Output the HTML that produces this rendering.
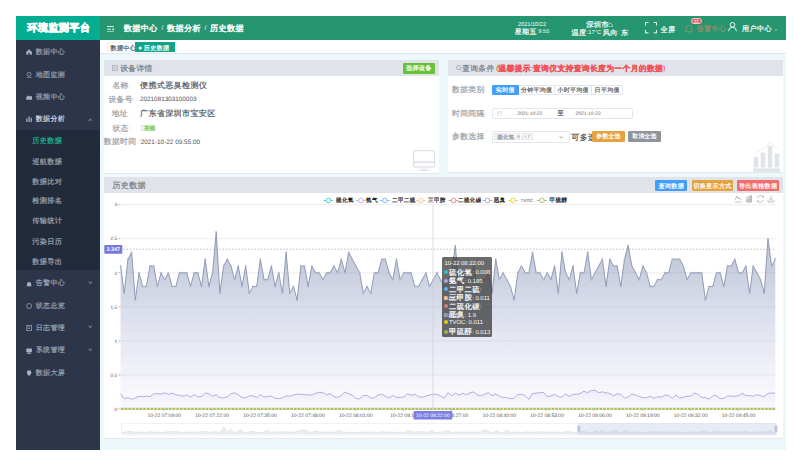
<!DOCTYPE html>
<html><head><meta charset="utf-8">
<style>
*{box-sizing:border-box;margin:0;padding:0;text-rendering:geometricPrecision}
html,body{width:794px;height:466px;overflow:hidden;background:#fff;font-family:"Liberation Sans",sans-serif;position:relative}
.a{position:absolute;white-space:nowrap}
.c{font-size:1.25em;letter-spacing:0.05em;-webkit-text-stroke:0.2px currentColor;position:relative;top:0.12em}
.logo .c{-webkit-text-stroke:0.75px currentColor}
.bc .c{-webkit-text-stroke:0.4px currentColor}
tspan.c{font-size:1.25em;letter-spacing:0.05em;stroke:currentColor;stroke-width:0.2px}
.logo{left:16px;top:16px;width:84px;height:24px;background:#02ad91;color:#fff;font-weight:bold;font-size:8px;line-height:24px;text-align:center;padding-left:1.8px}
.hdr{left:100px;top:16px;width:686px;height:24px;background:#259670}
.side{left:16px;top:40px;width:84px;height:410px;background:#2d354b}
.sub{left:16px;top:130.4px;width:84px;height:140px;background:#212b3c}
.mi{position:absolute;left:35.7px;font-size:5.6px;color:#9aa2ae;line-height:8px;height:8px}
.si{position:absolute;left:32.2px;font-size:5.75px;color:#9aa2ae;line-height:8px;height:8px}
.ico{position:absolute;left:25.6px;width:6.2px;height:6px}
.arr{position:absolute;left:88.5px;width:2.6px;height:2.6px;border-left:0.6px solid #6f7a8c;border-top:0.6px solid #6f7a8c}
.tabs{left:100px;top:40px;width:686px;height:13.6px;background:#fff;border-bottom:0.6px solid #e1e7ed}
.cont{left:100px;top:53.6px;width:686px;height:396.4px;background:#edf8fb}
.card{position:absolute;background:#fff;border-bottom:0.6px solid #e3e8ee}
.ch{position:absolute;left:0;top:0;right:0;height:15.6px;background:#e0e3e9}
.wt{color:#fff}
.lbl{position:absolute;font-size:6.2px;color:#9a9ea6;text-align:center;width:40px;left:101.5px;line-height:8px}
.val{position:absolute;font-size:6.4px;color:#50555e;left:140px;line-height:8px}
.btn{position:absolute;color:#fff;font-size:4.9px;text-align:center;border-radius:1.2px}
.rb{position:absolute;top:84.6px;height:10.8px;border:0.5px solid #e3e6ec;font-size:4.8px;color:#606266;text-align:center;line-height:10px;background:#fff}
.tt{position:absolute;left:442px;top:257.2px;width:50px;height:80.1px;background:rgba(55,55,55,0.74);border-radius:1.5px;color:#fff;font-size:5.9px;padding:2.4px 0 0 1.8px}
.tth{line-height:8.5px;height:8.5px;padding-left:0.6px}
.ttr{line-height:8.5px;height:8.5px}
.ttr i{display:inline-block;width:4px;height:4px;border-radius:50%;margin-right:1.2px;vertical-align:-0.3px}
</style></head><body>
<!-- header -->
<div class="a logo"><span class="c">环境监测平台</span></div>
<div class="a hdr"></div>
<svg class="a" style="left:107px;top:25.6px" width="7" height="6.4" viewBox="0 0 7 6.4"><rect x="0" y="0" width="6.8" height="1" fill="#dcefe7"/><rect x="0" y="2.7" width="3.8" height="1" fill="#dcefe7"/><rect x="0" y="5.4" width="6.8" height="1" fill="#dcefe7"/><path d="M6.8 1.7 L4.8 3.2 L6.8 4.7Z" fill="#dcefe7"/></svg>
<div class="a wt bc" style="left:123.8px;top:24.3px;font-size:6.5px;line-height:8px"><span class="c">数据中心</span> &nbsp;/&nbsp; <span class="c">数据分析</span> &nbsp;/&nbsp; <span class="c">历史数据</span></div>
<div class="a wt" style="left:512px;width:40px;text-align:center;top:22.4px;font-size:5.6px;line-height:6.6px">2021/10/22<br><span class="c">星期五</span> 9:55</div>
<div class="a wt" style="left:570px;width:60px;text-align:center;top:21.6px;font-size:5.75px;line-height:6.3px"><span class="c">深圳市</span> &nbsp;&nbsp;<br><span class="c">温度</span>:17°C <span class="c">风向</span>: <span class="c">东</span></div>
<svg class="a" style="left:607px;top:23.3px" width="6" height="4" viewBox="0 0 7 5" fill="none" stroke="#fff" stroke-width="0.75"><path d="M1.5 4.6h4a1.3 1.3 0 0 0 0.2-2.6a2 2 0 0 0-3.8-0.3a1.4 1.4 0 0 0-0.4 2.9z"/></svg>
<svg class="a" style="left:645.3px;top:22.4px" width="12.2" height="11.4" viewBox="0 0 12.2 11.4" fill="none" stroke="#fff" stroke-width="1"><path d="M0.5 3.5V0.5H3.5M8.7 0.5H11.7V3.5M11.7 7.9V10.9H8.7M3.5 10.9H0.5V7.9"/></svg>
<div class="a wt" style="left:660.4px;top:25.3px;font-size:5.8px;line-height:7px"><span class="c">全屏</span></div>
<svg class="a" style="left:685.3px;top:23.7px" width="8" height="9" viewBox="0 0 8 9" fill="none" stroke="#9a8f6a" stroke-width="0.8"><path d="M1.2 6.8V4a2.8 2.8 0 0 1 5.6 0v2.8l0.8 0.8H0.4z M3 8.2h2"/></svg>
<div class="a" style="left:690.8px;top:17.8px;width:10.8px;height:6.2px;border-radius:3.1px;background:#ef5358;border:0.5px solid #f6c9c9;color:#fff;font-size:4.6px;line-height:5.2px;text-align:center">22</div>
<div class="a" style="left:696.7px;top:25.3px;font-size:5.6px;line-height:7px;color:#9a8f6a"><span class="c">告警中心</span></div>
<svg class="a" style="left:727.8px;top:22.4px" width="9" height="9.6" viewBox="0 0 9 9.6" fill="none" stroke="#fff" stroke-width="0.9"><circle cx="4.5" cy="2.8" r="2.3"/><path d="M0.6 9.2a3.9 3.9 0 0 1 7.8 0"/></svg>
<div class="a wt" style="left:742px;top:25.3px;font-size:5.7px;line-height:7px"><span class="c">用户中心</span></div>
<div class="a" style="left:775px;top:29.4px;width:2px;height:1.2px;background:#6aae90"></div>

<!-- sidebar -->
<div class="a side"></div>
<div class="a sub"></div>
<svg class="ico" style="top:49.3px" viewBox="0 0 6.2 6"><path d="M0.2 3.1 L3.1 0.3 L6 3.1 V5.8 H3.8 V4.1 H2.4 V5.8 H0.2Z" fill="#a3abb8"/></svg>
<div class="mi" style="top:48.0px"><span class="c">数据中心</span></div>
<svg class="ico" style="top:71.5px" viewBox="0 0 6.2 6" fill="none" stroke="#aab2bf" stroke-width="0.7"><circle cx="3.1" cy="2.4" r="2"/><path d="M0.5 5.8h5.2"/></svg>
<div class="mi" style="top:70.7px"><span class="c">地图监测</span></div>
<svg class="ico" style="top:94.0px" viewBox="0 0 6.2 6"><path d="M0.3 5.8V3L2.5 1.5L4 2.5L6 2V5.8Z" fill="#aab2bf"/></svg>
<div class="mi" style="top:93.0px"><span class="c">视频中心</span></div>
<svg class="ico" style="top:116.2px" viewBox="0 0 6.2 6" fill="#aab2bf"><rect x="0.3" y="2.5" width="1.2" height="3.5"/><rect x="2.5" y="0.5" width="1.2" height="5.5"/><rect x="4.7" y="1.8" width="1.2" height="4.2"/></svg>
<div class="mi" style="top:115.2px;color:#d5dbe3"><span class="c">数据分析</span></div>
<div class="arr" style="top:118.8px;transform:rotate(45deg)"></div>
<div class="si" style="top:136.0px;color:#1fb592"><span class="c">历史数据</span></div>
<div class="si" style="top:156.8px"><span class="c">巡航数据</span></div>
<div class="si" style="top:177.0px"><span class="c">数据比对</span></div>
<div class="si" style="top:196.6px"><span class="c">检测排名</span></div>
<div class="si" style="top:216.5px"><span class="c">传输统计</span></div>
<div class="si" style="top:236.7px"><span class="c">污染日历</span></div>
<div class="si" style="top:257.0px"><span class="c">数据导出</span></div>
<svg class="ico" style="top:280.6px" viewBox="0 0 6.2 6"><path d="M1 4.6V3a2.1 2.1 0 0 1 4.2 0v1.6l0.7 0.7H0.3z" fill="#aab2bf"/></svg>
<div class="mi" style="top:279.6px"><span class="c">告警中心</span></div>
<div class="arr" style="top:280.5px;transform:rotate(225deg)"></div>
<svg class="ico" style="top:303.0px" viewBox="0 0 6.2 6" fill="none" stroke="#aab2bf" stroke-width="0.7"><circle cx="3.1" cy="3" r="2.5"/></svg>
<div class="mi" style="top:302.0px"><span class="c">状态总览</span></div>
<svg class="ico" style="top:325.3px" viewBox="0 0 6.2 6" fill="none" stroke="#aab2bf" stroke-width="0.7"><rect x="0.8" y="0.4" width="4.6" height="5.3"/><path d="M2 2h2M2 3.5h2"/></svg>
<div class="mi" style="top:324.3px"><span class="c">日志管理</span></div>
<div class="arr" style="top:325.2px;transform:rotate(225deg)"></div>
<svg class="ico" style="top:347.6px" viewBox="0 0 6.2 6" fill="#aab2bf"><rect x="0.3" y="0.5" width="5.6" height="3.8"/><rect x="2.5" y="4.3" width="1.2" height="1"/><rect x="1.2" y="5.2" width="3.8" height="0.8"/></svg>
<div class="mi" style="top:346.6px"><span class="c">系统管理</span></div>
<div class="arr" style="top:347.5px;transform:rotate(225deg)"></div>
<svg class="ico" style="top:370.0px" viewBox="0 0 6.2 6" fill="#aab2bf"><path d="M3.1 0.2a2.3 2.3 0 0 1 2.3 2.3c0 1.6-2.3 3.5-2.3 3.5S0.8 4.1 0.8 2.5A2.3 2.3 0 0 1 3.1 0.2z"/></svg>
<div class="mi" style="top:369.0px"><span class="c">数据大屏</span></div>

<!-- tabs -->
<div class="a tabs"></div>
<div class="a" style="left:106.5px;top:42px;width:25.9px;height:9.6px;border:0.5px solid #eef0f3;font-size:4.9px;line-height:10px;color:#555;padding-left:3px"><span class="c">数据中心</span></div>
<div class="a" style="left:134.8px;top:42px;width:40px;height:9.9px;background:#12a488"></div><svg class="a" style="left:138px;top:44.5px" width="5" height="5"><circle cx="2.2" cy="3" r="1.6" fill="#fff"/></svg><div class="a" style="left:143.8px;top:43px;font-size:4.9px;line-height:9.9px;color:#fff"><span class="c">历史数据</span></div><div class="a" style="left:166.4px;top:43px;font-size:4.2px;line-height:9.9px;color:#cdeee6">×</div>

<!-- content -->
<div class="a cont"></div>

<!-- card 1 -->
<div class="card" style="left:104px;top:60px;width:335.4px;height:113.5px"><div class="ch"></div></div>
<svg class="a" style="left:111.8px;top:65px" width="6" height="6" viewBox="0 0 6 6" fill="none" stroke="#9aa0aa" stroke-width="0.6"><rect x="0.4" y="0.4" width="5.2" height="5.2"/><path d="M1.5 2.2h3M1.5 3.8h3"/></svg>
<div class="a" style="left:120.2px;top:64px;font-size:6.2px;line-height:8px;color:#767b85"><span class="c">设备详情</span></div>
<div class="a btn" style="left:402.7px;top:62.5px;width:32.3px;height:11.3px;line-height:11.3px;background:#67c23a"><span class="c">选择设备</span></div>
<div class="lbl" style="top:80.6px"><span class="c">名称</span>:</div>
<div class="lbl" style="top:94.8px"><span class="c">设备号</span>:</div>
<div class="lbl" style="top:109px"><span class="c">地址</span> :</div>
<div class="lbl" style="top:123.6px"><span class="c">状态</span>:</div>
<div class="lbl" style="top:137.2px;left:101.8px"><span class="c">数据时间</span> :</div>
<div class="val" style="top:80.6px"><span class="c">便携式恶臭检测仪</span></div>
<div class="val" style="top:96.3px;font-size:6.35px">2021081303100003</div>
<div class="val" style="top:109px"><span class="c">广东省深圳市宝安区</span></div>
<div class="a" style="left:140.7px;top:124.5px;width:13.9px;height:6.9px;background:#eaf8e4;border:0.4px solid #d6f0cb;color:#67c23a;font-size:4.3px;line-height:6.3px;padding-left:2.5px"><span class="c">在线</span></div>
<div class="val" style="top:138.6px;left:140.7px;font-size:6.4px">2021-10-22 09:55:00</div>
<svg class="a" style="left:412.5px;top:149.5px" width="22" height="22" viewBox="0 0 22 22" fill="none" stroke="#d5d9e0" stroke-width="1.05"><rect x="0.7" y="0.7" width="20.6" height="16.2" rx="1"/><path d="M0.7 12.1h20.6M11 17v2.6"/><rect x="6.4" y="19.5" width="9.2" height="1.2" fill="#d5d9e0" stroke="none"/></svg>

<!-- card 2 -->
<div class="card" style="left:447.7px;top:60px;width:335.5px;height:113.3px"><div class="ch"></div></div>
<svg class="a" style="left:456.4px;top:64.8px" width="5.6" height="6" viewBox="0 0 5.6 6" fill="none" stroke="#8d929b" stroke-width="0.6"><circle cx="2.6" cy="2.6" r="2.1"/><path d="M4.1 4.1l1.2 1.4"/></svg>
<div class="a" style="left:462px;top:64px;font-size:6.2px;line-height:8px;color:#767b85"><span class="c">查询条件</span> <span style="color:#f0525a;font-weight:bold">(<span class="c">温馨提示</span>:<span class="c">查询仪支持查询长度为一个月的数据</span>)</span></div>
<div class="a" style="left:452px;top:85.4px;font-size:6.2px;line-height:8px;color:#9a9ea6"><span class="c">数据类别</span>:</div>
<div class="rb" style="left:491.5px;width:27.6px;background:#409eff;border-color:#409eff;color:#fff;border-radius:1px 0 0 1px"><span class="c">实时值</span></div>
<div class="rb" style="left:519px;width:36.3px;border-left:none"><span class="c">分钟平均值</span></div>
<div class="rb" style="left:555.3px;width:36.6px;border-left:none"><span class="c">小时平均值</span></div>
<div class="rb" style="left:591.9px;width:31.6px;border-left:none;border-radius:0 1px 1px 0"><span class="c">日平均值</span></div>
<div class="a" style="left:452px;top:109px;font-size:6.2px;line-height:8px;color:#9a9ea6"><span class="c">时间间隔</span>:</div>
<div class="a" style="left:491.5px;top:107.8px;width:141px;height:10.8px;border:0.5px solid #e3e6ec;background:#fff;border-radius:1.5px"></div>
<svg class="a" style="left:496.5px;top:110.6px" width="5.4" height="5.4" viewBox="0 0 5.4 5.4" fill="none" stroke="#c0c4cc" stroke-width="0.5"><rect x="0.5" y="0.7" width="4.4" height="4.3" rx="0.4"/><path d="M0.5 1.9h4.4"/></svg>
<div class="a" style="left:517.2px;top:110.8px;font-size:4.9px;line-height:8px;color:#606266">2021-10-22</div>
<div class="a" style="left:557.5px;top:109.6px;font-size:4.9px;line-height:8px;color:#606266"><span class="c">至</span></div>
<div class="a" style="left:575.6px;top:110.8px;font-size:4.9px;line-height:8px;color:#606266">2021-10-22</div>
<div class="a" style="left:452px;top:132.3px;font-size:6.2px;line-height:8px;color:#9a9ea6"><span class="c">参数选择</span>:</div>
<div class="a" style="left:491.5px;top:131px;width:78px;height:11.5px;border:0.5px solid #e3e6ec;background:#fff;border-radius:1.5px"></div>
<div class="a" style="left:494px;top:133.2px;width:25.8px;height:7.2px;background:#f4f4f5;border:0.4px solid #e9e9eb;font-size:4.4px;line-height:6.6px;color:#909399;padding-left:2.2px"><span class="c">硫化氢</span> <span style="display:inline-block;width:3.2px;height:3.2px;border-radius:50%;background:#c0c4cc;vertical-align:-0.3px;margin-left:1px"></span></div>
<div class="a" style="left:521px;top:133.2px;width:11.7px;height:7.2px;background:#f4f4f5;border:0.4px solid #e9e9eb;font-size:4.4px;line-height:6.6px;color:#909399;text-align:center">+ 7</div>
<div class="a" style="left:560.3px;top:134.6px;width:2.6px;height:2.6px;border-right:0.5px solid #c0c4cc;border-bottom:0.5px solid #c0c4cc;transform:rotate(45deg)"></div>
<div class="a" style="left:571.3px;top:132.6px;font-size:6.4px;line-height:8px;color:#45494f"><span class="c">可多选</span></div>
<div class="a btn" style="left:592.4px;top:131.2px;width:32.2px;height:10.8px;line-height:10.8px;background:#e6a23c;font-size:4.65px"><span class="c">参数全选</span></div>
<div class="a btn" style="left:628.4px;top:131.2px;width:32.2px;height:10.8px;line-height:10.8px;background:#909399;font-size:4.65px"><span class="c">取消全选</span></div>
<svg class="a" style="left:753.4px;top:141.3px" width="27" height="31" viewBox="0 0 27 31" fill="#e0e3e8"><rect x="0.7" y="16" width="4.6" height="10.5" rx="0.8"/><rect x="7.7" y="11.5" width="4.6" height="15" rx="0.8"/><rect x="14.7" y="4.8" width="4.6" height="21.7" rx="0.8"/><rect x="21.7" y="12.5" width="4.6" height="14" rx="0.8"/><rect x="0" y="27.4" width="27" height="3.4"/><path d="M2 13 L11 7 L17 1.5 L25 9" fill="none" stroke="#e0e3e8" stroke-width="0.7"/></svg>

<!-- card 3 -->
<div class="card" style="left:104px;top:176.5px;width:679.2px;height:262.3px"><div class="ch" style="height:16.2px"></div></div>
<div class="a" style="left:112.4px;top:180.8px;font-size:6.4px;line-height:8px;color:#767b85"><span class="c">历史数据</span></div>
<div class="a btn" style="left:655.3px;top:179.8px;width:32px;height:11px;line-height:11px;background:#409eff"><span class="c">查询数据</span></div>
<div class="a btn" style="left:691.7px;top:179.8px;width:41.6px;height:11px;line-height:11px;background:#e6a23c"><span class="c">切换显示方式</span></div>
<div class="a btn" style="left:737.4px;top:179.8px;width:41.6px;height:11px;line-height:11px;background:#f56c6c"><span class="c">导出表格数据</span></div>
<svg class="a" style="left:734px;top:195px" width="42" height="8" viewBox="0 0 42 8" fill="none" stroke="#9a9a9a" stroke-width="0.6"><path d="M1 5 L2.8 1 L4.2 4 L5.4 2.5 L7 5"/><path d="M0.8 7h6.5"/><rect x="12.5" y="4" width="1.2" height="3.5" fill="#9a9a9a" stroke="none"/><rect x="14.5" y="2.5" width="1.2" height="5" fill="#9a9a9a" stroke="none"/><rect x="16.5" y="1" width="1.2" height="6.5" fill="#9a9a9a" stroke="none"/><path d="M11.8 3L17.8 0.5"/><path d="M23.6 3.2a3.1 3.1 0 0 1 5.6-1.3M29.4 4.8a3.1 3.1 0 0 1-5.6 1.3"/><path d="M29.6 0.6v1.6h-1.6M23.4 7.4v-1.6h1.6"/><path d="M37 0.5v5M35 3.5l2 2l2-2M34 5v2h6v-2"/></svg>

<svg class="chart" width="794" height="466" viewBox="0 0 794 466" style="position:absolute;left:0;top:0">
<defs>
<linearGradient id="g1" x1="0" y1="0" x2="0" y2="1" gradientUnits="userSpaceOnUse" >
</linearGradient>
<linearGradient id="go" x1="0" y1="230" x2="0" y2="409" gradientUnits="userSpaceOnUse">
<stop offset="0" stop-color="#8d98b3" stop-opacity="0.62"/>
<stop offset="0.5" stop-color="#919bc4" stop-opacity="0.3"/>
<stop offset="1" stop-color="#a0a4e0" stop-opacity="0.03"/>
</linearGradient>
<linearGradient id="ga" x1="0" y1="390" x2="0" y2="409" gradientUnits="userSpaceOnUse">
<stop offset="0" stop-color="#b6a2de" stop-opacity="0.14"/>
<stop offset="1" stop-color="#b6a2de" stop-opacity="0.02"/>
</linearGradient>
</defs>
<g><line x1="118.5" y1="204.70" x2="775.5" y2="204.70" stroke="#e0e0e0" stroke-width="0.6"/><line x1="118.4" y1="204.70" x2="120.4" y2="204.70" stroke="#999" stroke-width="0.6"/><line x1="118.5" y1="238.75" x2="775.5" y2="238.75" stroke="#e0e0e0" stroke-width="0.6"/><line x1="118.4" y1="238.75" x2="120.4" y2="238.75" stroke="#999" stroke-width="0.6"/><line x1="118.5" y1="272.80" x2="775.5" y2="272.80" stroke="#e0e0e0" stroke-width="0.6"/><line x1="118.4" y1="272.80" x2="120.4" y2="272.80" stroke="#999" stroke-width="0.6"/><line x1="118.5" y1="306.85" x2="775.5" y2="306.85" stroke="#e0e0e0" stroke-width="0.6"/><line x1="118.4" y1="306.85" x2="120.4" y2="306.85" stroke="#999" stroke-width="0.6"/><line x1="118.5" y1="340.90" x2="775.5" y2="340.90" stroke="#e0e0e0" stroke-width="0.6"/><line x1="118.4" y1="340.90" x2="120.4" y2="340.90" stroke="#999" stroke-width="0.6"/><line x1="118.5" y1="374.95" x2="775.5" y2="374.95" stroke="#e0e0e0" stroke-width="0.6"/><line x1="118.4" y1="374.95" x2="120.4" y2="374.95" stroke="#999" stroke-width="0.6"/><line x1="118.5" y1="409.00" x2="775.5" y2="409.00" stroke="#c8c8c8" stroke-width="0.6"/><line x1="118.4" y1="409.00" x2="120.4" y2="409.00" stroke="#999" stroke-width="0.6"/></g>
<g font-family="Liberation Sans" font-size="4.75" fill="#555"><text x="117.2" y="206.40" text-anchor="end">3</text><text x="117.2" y="240.45" text-anchor="end">2.5</text><text x="117.2" y="274.50" text-anchor="end">2</text><text x="117.2" y="308.55" text-anchor="end">1.5</text><text x="117.2" y="342.60" text-anchor="end">1</text><text x="117.2" y="376.65" text-anchor="end">0.5</text><text x="117.2" y="410.70" text-anchor="end">0</text></g>
<polygon points="120.60,409 120.60,265.99 124.28,293.23 127.96,259.18 131.63,252.37 135.31,300.04 138.99,272.80 142.67,286.42 146.35,286.42 150.02,265.99 153.70,265.99 157.38,286.42 161.06,272.80 164.74,279.61 168.42,272.80 172.09,286.42 175.77,286.42 179.45,272.80 183.13,272.80 186.81,272.80 190.48,286.42 194.16,272.80 197.84,272.80 201.52,286.42 205.20,259.18 208.87,286.42 212.55,272.80 216.23,231.94 219.91,293.23 223.59,265.99 227.26,259.18 230.94,265.99 234.62,279.61 238.30,265.99 241.98,286.42 245.66,265.99 249.33,293.23 253.01,286.42 256.69,286.42 260.37,259.18 264.05,279.61 267.72,279.61 271.40,265.99 275.08,286.42 278.76,272.80 282.44,293.23 286.11,252.37 289.79,293.23 293.47,286.42 297.15,300.04 300.83,265.99 304.50,265.99 308.18,286.42 311.86,265.99 315.54,272.80 319.22,272.80 322.89,279.61 326.57,272.80 330.25,272.80 333.93,265.99 337.61,272.80 341.29,259.18 344.96,272.80 348.64,252.37 352.32,259.18 356.00,265.99 359.68,272.80 363.35,293.23 367.03,286.42 370.71,293.23 374.39,272.80 378.07,272.80 381.74,259.18 385.42,259.18 389.10,272.80 392.78,279.61 396.46,259.18 400.13,279.61 403.81,272.80 407.49,272.80 411.17,272.80 414.85,286.42 418.53,286.42 422.20,279.61 425.88,272.80 429.56,286.42 433.24,279.61 436.92,272.80 440.59,279.61 444.27,286.42 447.95,279.61 451.63,272.80 455.31,245.56 458.98,286.42 462.66,279.61 466.34,272.80 470.02,279.61 473.70,265.99 477.37,286.42 481.05,279.61 484.73,279.61 488.41,272.80 492.09,293.23 495.77,259.18 499.44,279.61 503.12,272.80 506.80,279.61 510.48,286.42 514.16,300.04 517.83,272.80 521.51,265.99 525.19,272.80 528.87,272.80 532.55,252.37 536.22,272.80 539.90,272.80 543.58,279.61 547.26,272.80 550.94,279.61 554.61,265.99 558.29,293.23 561.97,252.37 565.65,272.80 569.33,279.61 573.01,265.99 576.68,293.23 580.36,272.80 584.04,272.80 587.72,252.37 591.40,279.61 595.07,272.80 598.75,265.99 602.43,259.18 606.11,286.42 609.79,259.18 613.46,265.99 617.14,265.99 620.82,286.42 624.50,259.18 628.18,245.56 631.85,265.99 635.53,272.80 639.21,279.61 642.89,265.99 646.57,272.80 650.24,286.42 653.92,286.42 657.60,279.61 661.28,279.61 664.96,272.80 668.64,272.80 672.31,259.18 675.99,259.18 679.67,259.18 683.35,265.99 687.03,279.61 690.70,272.80 694.38,272.80 698.06,272.80 701.74,272.80 705.42,300.04 709.09,286.42 712.77,286.42 716.45,272.80 720.13,272.80 723.81,286.42 727.48,265.99 731.16,265.99 734.84,259.18 738.52,272.80 742.20,272.80 745.88,265.99 749.55,293.23 753.23,265.99 756.91,272.80 760.59,279.61 764.27,293.23 767.94,238.75 771.62,265.99 775.30,259.18 775.30,409" fill="url(#go)"/>
<polyline points="120.60,265.99 124.28,293.23 127.96,259.18 131.63,252.37 135.31,300.04 138.99,272.80 142.67,286.42 146.35,286.42 150.02,265.99 153.70,265.99 157.38,286.42 161.06,272.80 164.74,279.61 168.42,272.80 172.09,286.42 175.77,286.42 179.45,272.80 183.13,272.80 186.81,272.80 190.48,286.42 194.16,272.80 197.84,272.80 201.52,286.42 205.20,259.18 208.87,286.42 212.55,272.80 216.23,231.94 219.91,293.23 223.59,265.99 227.26,259.18 230.94,265.99 234.62,279.61 238.30,265.99 241.98,286.42 245.66,265.99 249.33,293.23 253.01,286.42 256.69,286.42 260.37,259.18 264.05,279.61 267.72,279.61 271.40,265.99 275.08,286.42 278.76,272.80 282.44,293.23 286.11,252.37 289.79,293.23 293.47,286.42 297.15,300.04 300.83,265.99 304.50,265.99 308.18,286.42 311.86,265.99 315.54,272.80 319.22,272.80 322.89,279.61 326.57,272.80 330.25,272.80 333.93,265.99 337.61,272.80 341.29,259.18 344.96,272.80 348.64,252.37 352.32,259.18 356.00,265.99 359.68,272.80 363.35,293.23 367.03,286.42 370.71,293.23 374.39,272.80 378.07,272.80 381.74,259.18 385.42,259.18 389.10,272.80 392.78,279.61 396.46,259.18 400.13,279.61 403.81,272.80 407.49,272.80 411.17,272.80 414.85,286.42 418.53,286.42 422.20,279.61 425.88,272.80 429.56,286.42 433.24,279.61 436.92,272.80 440.59,279.61 444.27,286.42 447.95,279.61 451.63,272.80 455.31,245.56 458.98,286.42 462.66,279.61 466.34,272.80 470.02,279.61 473.70,265.99 477.37,286.42 481.05,279.61 484.73,279.61 488.41,272.80 492.09,293.23 495.77,259.18 499.44,279.61 503.12,272.80 506.80,279.61 510.48,286.42 514.16,300.04 517.83,272.80 521.51,265.99 525.19,272.80 528.87,272.80 532.55,252.37 536.22,272.80 539.90,272.80 543.58,279.61 547.26,272.80 550.94,279.61 554.61,265.99 558.29,293.23 561.97,252.37 565.65,272.80 569.33,279.61 573.01,265.99 576.68,293.23 580.36,272.80 584.04,272.80 587.72,252.37 591.40,279.61 595.07,272.80 598.75,265.99 602.43,259.18 606.11,286.42 609.79,259.18 613.46,265.99 617.14,265.99 620.82,286.42 624.50,259.18 628.18,245.56 631.85,265.99 635.53,272.80 639.21,279.61 642.89,265.99 646.57,272.80 650.24,286.42 653.92,286.42 657.60,279.61 661.28,279.61 664.96,272.80 668.64,272.80 672.31,259.18 675.99,259.18 679.67,259.18 683.35,265.99 687.03,279.61 690.70,272.80 694.38,272.80 698.06,272.80 701.74,272.80 705.42,300.04 709.09,286.42 712.77,286.42 716.45,272.80 720.13,272.80 723.81,286.42 727.48,265.99 731.16,265.99 734.84,259.18 738.52,272.80 742.20,272.80 745.88,265.99 749.55,293.23 753.23,265.99 756.91,272.80 760.59,279.61 764.27,293.23 767.94,238.75 771.62,265.99 775.30,259.18" fill="none" stroke="#8792b0" stroke-width="0.9" stroke-linejoin="round"/>
<g fill="#d5d9e6" stroke="#8792b0" stroke-width="0.35"><circle cx="120.60" cy="265.99" r="0.75"/><circle cx="124.28" cy="293.23" r="0.75"/><circle cx="127.96" cy="259.18" r="0.75"/><circle cx="131.63" cy="252.37" r="0.75"/><circle cx="135.31" cy="300.04" r="0.75"/><circle cx="138.99" cy="272.80" r="0.75"/><circle cx="142.67" cy="286.42" r="0.75"/><circle cx="146.35" cy="286.42" r="0.75"/><circle cx="150.02" cy="265.99" r="0.75"/><circle cx="153.70" cy="265.99" r="0.75"/><circle cx="157.38" cy="286.42" r="0.75"/><circle cx="161.06" cy="272.80" r="0.75"/><circle cx="164.74" cy="279.61" r="0.75"/><circle cx="168.42" cy="272.80" r="0.75"/><circle cx="172.09" cy="286.42" r="0.75"/><circle cx="175.77" cy="286.42" r="0.75"/><circle cx="179.45" cy="272.80" r="0.75"/><circle cx="183.13" cy="272.80" r="0.75"/><circle cx="186.81" cy="272.80" r="0.75"/><circle cx="190.48" cy="286.42" r="0.75"/><circle cx="194.16" cy="272.80" r="0.75"/><circle cx="197.84" cy="272.80" r="0.75"/><circle cx="201.52" cy="286.42" r="0.75"/><circle cx="205.20" cy="259.18" r="0.75"/><circle cx="208.87" cy="286.42" r="0.75"/><circle cx="212.55" cy="272.80" r="0.75"/><circle cx="216.23" cy="231.94" r="0.75"/><circle cx="219.91" cy="293.23" r="0.75"/><circle cx="223.59" cy="265.99" r="0.75"/><circle cx="227.26" cy="259.18" r="0.75"/><circle cx="230.94" cy="265.99" r="0.75"/><circle cx="234.62" cy="279.61" r="0.75"/><circle cx="238.30" cy="265.99" r="0.75"/><circle cx="241.98" cy="286.42" r="0.75"/><circle cx="245.66" cy="265.99" r="0.75"/><circle cx="249.33" cy="293.23" r="0.75"/><circle cx="253.01" cy="286.42" r="0.75"/><circle cx="256.69" cy="286.42" r="0.75"/><circle cx="260.37" cy="259.18" r="0.75"/><circle cx="264.05" cy="279.61" r="0.75"/><circle cx="267.72" cy="279.61" r="0.75"/><circle cx="271.40" cy="265.99" r="0.75"/><circle cx="275.08" cy="286.42" r="0.75"/><circle cx="278.76" cy="272.80" r="0.75"/><circle cx="282.44" cy="293.23" r="0.75"/><circle cx="286.11" cy="252.37" r="0.75"/><circle cx="289.79" cy="293.23" r="0.75"/><circle cx="293.47" cy="286.42" r="0.75"/><circle cx="297.15" cy="300.04" r="0.75"/><circle cx="300.83" cy="265.99" r="0.75"/><circle cx="304.50" cy="265.99" r="0.75"/><circle cx="308.18" cy="286.42" r="0.75"/><circle cx="311.86" cy="265.99" r="0.75"/><circle cx="315.54" cy="272.80" r="0.75"/><circle cx="319.22" cy="272.80" r="0.75"/><circle cx="322.89" cy="279.61" r="0.75"/><circle cx="326.57" cy="272.80" r="0.75"/><circle cx="330.25" cy="272.80" r="0.75"/><circle cx="333.93" cy="265.99" r="0.75"/><circle cx="337.61" cy="272.80" r="0.75"/><circle cx="341.29" cy="259.18" r="0.75"/><circle cx="344.96" cy="272.80" r="0.75"/><circle cx="348.64" cy="252.37" r="0.75"/><circle cx="352.32" cy="259.18" r="0.75"/><circle cx="356.00" cy="265.99" r="0.75"/><circle cx="359.68" cy="272.80" r="0.75"/><circle cx="363.35" cy="293.23" r="0.75"/><circle cx="367.03" cy="286.42" r="0.75"/><circle cx="370.71" cy="293.23" r="0.75"/><circle cx="374.39" cy="272.80" r="0.75"/><circle cx="378.07" cy="272.80" r="0.75"/><circle cx="381.74" cy="259.18" r="0.75"/><circle cx="385.42" cy="259.18" r="0.75"/><circle cx="389.10" cy="272.80" r="0.75"/><circle cx="392.78" cy="279.61" r="0.75"/><circle cx="396.46" cy="259.18" r="0.75"/><circle cx="400.13" cy="279.61" r="0.75"/><circle cx="403.81" cy="272.80" r="0.75"/><circle cx="407.49" cy="272.80" r="0.75"/><circle cx="411.17" cy="272.80" r="0.75"/><circle cx="414.85" cy="286.42" r="0.75"/><circle cx="418.53" cy="286.42" r="0.75"/><circle cx="422.20" cy="279.61" r="0.75"/><circle cx="425.88" cy="272.80" r="0.75"/><circle cx="429.56" cy="286.42" r="0.75"/><circle cx="433.24" cy="279.61" r="0.75"/><circle cx="436.92" cy="272.80" r="0.75"/><circle cx="440.59" cy="279.61" r="0.75"/><circle cx="444.27" cy="286.42" r="0.75"/><circle cx="447.95" cy="279.61" r="0.75"/><circle cx="451.63" cy="272.80" r="0.75"/><circle cx="455.31" cy="245.56" r="0.75"/><circle cx="458.98" cy="286.42" r="0.75"/><circle cx="462.66" cy="279.61" r="0.75"/><circle cx="466.34" cy="272.80" r="0.75"/><circle cx="470.02" cy="279.61" r="0.75"/><circle cx="473.70" cy="265.99" r="0.75"/><circle cx="477.37" cy="286.42" r="0.75"/><circle cx="481.05" cy="279.61" r="0.75"/><circle cx="484.73" cy="279.61" r="0.75"/><circle cx="488.41" cy="272.80" r="0.75"/><circle cx="492.09" cy="293.23" r="0.75"/><circle cx="495.77" cy="259.18" r="0.75"/><circle cx="499.44" cy="279.61" r="0.75"/><circle cx="503.12" cy="272.80" r="0.75"/><circle cx="506.80" cy="279.61" r="0.75"/><circle cx="510.48" cy="286.42" r="0.75"/><circle cx="514.16" cy="300.04" r="0.75"/><circle cx="517.83" cy="272.80" r="0.75"/><circle cx="521.51" cy="265.99" r="0.75"/><circle cx="525.19" cy="272.80" r="0.75"/><circle cx="528.87" cy="272.80" r="0.75"/><circle cx="532.55" cy="252.37" r="0.75"/><circle cx="536.22" cy="272.80" r="0.75"/><circle cx="539.90" cy="272.80" r="0.75"/><circle cx="543.58" cy="279.61" r="0.75"/><circle cx="547.26" cy="272.80" r="0.75"/><circle cx="550.94" cy="279.61" r="0.75"/><circle cx="554.61" cy="265.99" r="0.75"/><circle cx="558.29" cy="293.23" r="0.75"/><circle cx="561.97" cy="252.37" r="0.75"/><circle cx="565.65" cy="272.80" r="0.75"/><circle cx="569.33" cy="279.61" r="0.75"/><circle cx="573.01" cy="265.99" r="0.75"/><circle cx="576.68" cy="293.23" r="0.75"/><circle cx="580.36" cy="272.80" r="0.75"/><circle cx="584.04" cy="272.80" r="0.75"/><circle cx="587.72" cy="252.37" r="0.75"/><circle cx="591.40" cy="279.61" r="0.75"/><circle cx="595.07" cy="272.80" r="0.75"/><circle cx="598.75" cy="265.99" r="0.75"/><circle cx="602.43" cy="259.18" r="0.75"/><circle cx="606.11" cy="286.42" r="0.75"/><circle cx="609.79" cy="259.18" r="0.75"/><circle cx="613.46" cy="265.99" r="0.75"/><circle cx="617.14" cy="265.99" r="0.75"/><circle cx="620.82" cy="286.42" r="0.75"/><circle cx="624.50" cy="259.18" r="0.75"/><circle cx="628.18" cy="245.56" r="0.75"/><circle cx="631.85" cy="265.99" r="0.75"/><circle cx="635.53" cy="272.80" r="0.75"/><circle cx="639.21" cy="279.61" r="0.75"/><circle cx="642.89" cy="265.99" r="0.75"/><circle cx="646.57" cy="272.80" r="0.75"/><circle cx="650.24" cy="286.42" r="0.75"/><circle cx="653.92" cy="286.42" r="0.75"/><circle cx="657.60" cy="279.61" r="0.75"/><circle cx="661.28" cy="279.61" r="0.75"/><circle cx="664.96" cy="272.80" r="0.75"/><circle cx="668.64" cy="272.80" r="0.75"/><circle cx="672.31" cy="259.18" r="0.75"/><circle cx="675.99" cy="259.18" r="0.75"/><circle cx="679.67" cy="259.18" r="0.75"/><circle cx="683.35" cy="265.99" r="0.75"/><circle cx="687.03" cy="279.61" r="0.75"/><circle cx="690.70" cy="272.80" r="0.75"/><circle cx="694.38" cy="272.80" r="0.75"/><circle cx="698.06" cy="272.80" r="0.75"/><circle cx="701.74" cy="272.80" r="0.75"/><circle cx="705.42" cy="300.04" r="0.75"/><circle cx="709.09" cy="286.42" r="0.75"/><circle cx="712.77" cy="286.42" r="0.75"/><circle cx="716.45" cy="272.80" r="0.75"/><circle cx="720.13" cy="272.80" r="0.75"/><circle cx="723.81" cy="286.42" r="0.75"/><circle cx="727.48" cy="265.99" r="0.75"/><circle cx="731.16" cy="265.99" r="0.75"/><circle cx="734.84" cy="259.18" r="0.75"/><circle cx="738.52" cy="272.80" r="0.75"/><circle cx="742.20" cy="272.80" r="0.75"/><circle cx="745.88" cy="265.99" r="0.75"/><circle cx="749.55" cy="293.23" r="0.75"/><circle cx="753.23" cy="265.99" r="0.75"/><circle cx="756.91" cy="272.80" r="0.75"/><circle cx="760.59" cy="279.61" r="0.75"/><circle cx="764.27" cy="293.23" r="0.75"/><circle cx="767.94" cy="238.75" r="0.75"/><circle cx="771.62" cy="265.99" r="0.75"/><circle cx="775.30" cy="259.18" r="0.75"/></g>
<polygon points="120.60,409 120.60,393.63 124.28,398.73 127.96,397.56 131.63,399.38 135.31,397.98 138.99,396.36 142.67,396.64 146.35,396.15 150.02,396.54 153.70,393.81 157.38,393.63 161.06,394.09 164.74,392.74 168.42,394.20 172.09,393.17 175.77,394.75 179.45,395.30 183.13,396.18 186.81,394.94 190.48,396.96 194.16,394.68 197.84,396.74 201.52,396.74 205.20,392.93 208.87,393.67 212.55,396.22 216.23,394.79 219.91,397.72 223.59,397.80 227.26,396.80 230.94,393.72 234.62,392.84 238.30,394.57 241.98,397.47 245.66,397.93 249.33,395.86 253.01,395.77 256.69,397.65 260.37,394.61 264.05,397.12 267.72,396.30 271.40,396.12 275.08,398.30 278.76,398.56 282.44,397.87 286.11,395.81 289.79,396.38 293.47,394.81 297.15,394.16 300.83,394.20 304.50,394.66 308.18,394.91 311.86,394.92 315.54,393.27 319.22,392.41 322.89,392.50 326.57,394.86 330.25,393.71 333.93,396.68 337.61,397.43 341.29,395.32 344.96,392.05 348.64,393.60 352.32,395.12 356.00,398.58 359.68,398.78 363.35,395.54 367.03,395.46 370.71,398.06 374.39,397.85 378.07,395.10 381.74,394.03 385.42,396.34 389.10,397.90 392.78,395.48 396.46,397.39 400.13,397.48 403.81,396.81 407.49,393.80 411.17,395.30 414.85,394.21 418.53,396.69 422.20,397.15 425.88,396.11 429.56,394.90 433.24,394.19 436.92,394.37 440.59,395.96 444.27,398.09 447.95,392.58 451.63,395.75 455.31,392.98 458.98,395.03 462.66,393.34 466.34,394.64 470.02,392.75 473.70,391.88 477.37,394.96 481.05,395.63 484.73,394.19 488.41,392.54 492.09,395.65 495.77,393.99 499.44,396.11 503.12,397.74 506.80,397.49 510.48,398.70 514.16,398.23 517.83,394.46 521.51,394.43 525.19,395.55 528.87,399.38 532.55,393.67 536.22,393.05 539.90,392.54 543.58,392.50 547.26,396.70 550.94,395.87 554.61,394.42 558.29,396.58 561.97,397.16 565.65,393.85 569.33,396.58 573.01,394.24 576.68,394.52 580.36,393.32 584.04,391.17 587.72,392.66 591.40,390.46 595.07,390.32 598.75,392.71 602.43,391.83 606.11,392.79 609.79,393.46 613.46,395.90 617.14,393.87 620.82,394.42 624.50,398.15 628.18,397.03 631.85,394.01 635.53,394.99 639.21,396.52 642.89,397.66 646.57,397.73 650.24,396.07 653.92,398.41 657.60,396.53 661.28,397.23 664.96,395.13 668.64,395.39 672.31,398.46 675.99,395.11 679.67,398.03 683.35,397.25 687.03,396.16 690.70,396.11 694.38,393.06 698.06,394.28 701.74,397.47 705.42,397.69 709.09,399.20 712.77,395.70 716.45,395.70 720.13,398.74 723.81,398.26 727.48,396.09 731.16,395.98 734.84,396.37 738.52,395.49 742.20,393.29 745.88,395.54 749.55,395.60 753.23,396.20 756.91,394.73 760.59,395.73 764.27,396.55 767.94,393.40 771.62,393.03 775.30,393.13 775.30,409" fill="url(#ga)"/>
<polyline points="120.60,393.63 124.28,398.73 127.96,397.56 131.63,399.38 135.31,397.98 138.99,396.36 142.67,396.64 146.35,396.15 150.02,396.54 153.70,393.81 157.38,393.63 161.06,394.09 164.74,392.74 168.42,394.20 172.09,393.17 175.77,394.75 179.45,395.30 183.13,396.18 186.81,394.94 190.48,396.96 194.16,394.68 197.84,396.74 201.52,396.74 205.20,392.93 208.87,393.67 212.55,396.22 216.23,394.79 219.91,397.72 223.59,397.80 227.26,396.80 230.94,393.72 234.62,392.84 238.30,394.57 241.98,397.47 245.66,397.93 249.33,395.86 253.01,395.77 256.69,397.65 260.37,394.61 264.05,397.12 267.72,396.30 271.40,396.12 275.08,398.30 278.76,398.56 282.44,397.87 286.11,395.81 289.79,396.38 293.47,394.81 297.15,394.16 300.83,394.20 304.50,394.66 308.18,394.91 311.86,394.92 315.54,393.27 319.22,392.41 322.89,392.50 326.57,394.86 330.25,393.71 333.93,396.68 337.61,397.43 341.29,395.32 344.96,392.05 348.64,393.60 352.32,395.12 356.00,398.58 359.68,398.78 363.35,395.54 367.03,395.46 370.71,398.06 374.39,397.85 378.07,395.10 381.74,394.03 385.42,396.34 389.10,397.90 392.78,395.48 396.46,397.39 400.13,397.48 403.81,396.81 407.49,393.80 411.17,395.30 414.85,394.21 418.53,396.69 422.20,397.15 425.88,396.11 429.56,394.90 433.24,394.19 436.92,394.37 440.59,395.96 444.27,398.09 447.95,392.58 451.63,395.75 455.31,392.98 458.98,395.03 462.66,393.34 466.34,394.64 470.02,392.75 473.70,391.88 477.37,394.96 481.05,395.63 484.73,394.19 488.41,392.54 492.09,395.65 495.77,393.99 499.44,396.11 503.12,397.74 506.80,397.49 510.48,398.70 514.16,398.23 517.83,394.46 521.51,394.43 525.19,395.55 528.87,399.38 532.55,393.67 536.22,393.05 539.90,392.54 543.58,392.50 547.26,396.70 550.94,395.87 554.61,394.42 558.29,396.58 561.97,397.16 565.65,393.85 569.33,396.58 573.01,394.24 576.68,394.52 580.36,393.32 584.04,391.17 587.72,392.66 591.40,390.46 595.07,390.32 598.75,392.71 602.43,391.83 606.11,392.79 609.79,393.46 613.46,395.90 617.14,393.87 620.82,394.42 624.50,398.15 628.18,397.03 631.85,394.01 635.53,394.99 639.21,396.52 642.89,397.66 646.57,397.73 650.24,396.07 653.92,398.41 657.60,396.53 661.28,397.23 664.96,395.13 668.64,395.39 672.31,398.46 675.99,395.11 679.67,398.03 683.35,397.25 687.03,396.16 690.70,396.11 694.38,393.06 698.06,394.28 701.74,397.47 705.42,397.69 709.09,399.20 712.77,395.70 716.45,395.70 720.13,398.74 723.81,398.26 727.48,396.09 731.16,395.98 734.84,396.37 738.52,395.49 742.20,393.29 745.88,395.54 749.55,395.60 753.23,396.20 756.91,394.73 760.59,395.73 764.27,396.55 767.94,393.40 771.62,393.03 775.30,393.13" fill="none" stroke="#ab98da" stroke-width="0.8"/>
<line x1="119.1" y1="408.9" x2="775.3" y2="408.9" stroke="#e6eaa8" stroke-width="2.2"/><line x1="120.6" y1="407.7" x2="775.3" y2="407.7" stroke="#a9d3e6" stroke-width="0.5" stroke-opacity="0.6"/><line x1="121.19999999999999" y1="408.9" x2="775.3" y2="408.9" stroke="#9ab356" stroke-width="1.5" stroke-dasharray="2.38 1.3"/>
<line x1="120" y1="249.2" x2="775.5" y2="249.2" stroke="#999" stroke-width="0.6" stroke-dasharray="1.6,1.6"/>
<rect x="104.3" y="245" width="18" height="8.8" rx="0.8" fill="#7479de"/>
<text x="113.3" y="251.2" font-family="Liberation Sans" font-size="5.3" fill="#fff" font-weight="bold" text-anchor="middle">2.347</text>
<line x1="433" y1="205" x2="433" y2="409" stroke="#cfcfcf" stroke-width="0.7"/>
<g font-family="Liberation Sans" font-size="5.0" fill="#555"><line x1="164.30" y1="409" x2="164.30" y2="411" stroke="#999" stroke-width="0.5"/><text x="164.30" y="416.8" text-anchor="middle">10-22 07:09:00</text><line x1="212.15" y1="409" x2="212.15" y2="411" stroke="#999" stroke-width="0.5"/><text x="212.15" y="416.8" text-anchor="middle">10-22 07:22:00</text><line x1="260.00" y1="409" x2="260.00" y2="411" stroke="#999" stroke-width="0.5"/><text x="260.00" y="416.8" text-anchor="middle">10-22 07:35:00</text><line x1="307.85" y1="409" x2="307.85" y2="411" stroke="#999" stroke-width="0.5"/><text x="307.85" y="416.8" text-anchor="middle">10-22 07:48:00</text><line x1="355.70" y1="409" x2="355.70" y2="411" stroke="#999" stroke-width="0.5"/><text x="355.70" y="416.8" text-anchor="middle">10-22 08:01:00</text><line x1="403.55" y1="409" x2="403.55" y2="411" stroke="#999" stroke-width="0.5"/><text x="403.55" y="416.8" text-anchor="middle">10-22 08:14</text><line x1="451.40" y1="409" x2="451.40" y2="411" stroke="#999" stroke-width="0.5"/><text x="451.40" y="416.8" text-anchor="middle">10-22 08:27:00</text><line x1="499.25" y1="409" x2="499.25" y2="411" stroke="#999" stroke-width="0.5"/><text x="499.25" y="416.8" text-anchor="middle">10-22 08:40:00</text><line x1="547.10" y1="409" x2="547.10" y2="411" stroke="#999" stroke-width="0.5"/><text x="547.10" y="416.8" text-anchor="middle">10-22 08:53:00</text><line x1="594.95" y1="409" x2="594.95" y2="411" stroke="#999" stroke-width="0.5"/><text x="594.95" y="416.8" text-anchor="middle">10-22 09:06:00</text><line x1="642.80" y1="409" x2="642.80" y2="411" stroke="#999" stroke-width="0.5"/><text x="642.80" y="416.8" text-anchor="middle">10-22 09:19:00</text><line x1="690.65" y1="409" x2="690.65" y2="411" stroke="#999" stroke-width="0.5"/><text x="690.65" y="416.8" text-anchor="middle">10-22 09:32:00</text><line x1="738.50" y1="409" x2="738.50" y2="411" stroke="#999" stroke-width="0.5"/><text x="738.50" y="416.8" text-anchor="middle">10-22 09:45:00</text></g>
<rect x="413.5" y="410.9" width="38.8" height="8.7" rx="1" fill="#7b80e0"/>
<text x="432.9" y="417" font-family="Liberation Sans" font-size="5.0" fill="#fff" text-anchor="middle">10-22 08:22:00</text>
<g font-family="Liberation Sans" font-size="4.5"><line x1="323.5" y1="200.5" x2="333.2" y2="200.5" stroke="#2ec7c9" stroke-width="0.8"/><circle cx="328.4" cy="200.5" r="2.3" fill="#fff" stroke="#2ec7c9" stroke-width="0.8"/><text x="336.0" y="202.2" fill="#555"><tspan class="c">硫化氢</tspan></text><line x1="356.0" y1="200.5" x2="365.7" y2="200.5" stroke="#b6a2de" stroke-width="0.8"/><circle cx="360.9" cy="200.5" r="2.3" fill="#fff" stroke="#b6a2de" stroke-width="0.8"/><text x="366.0" y="202.2" fill="#555"><tspan class="c">氨气</tspan></text><line x1="380.0" y1="200.5" x2="389.7" y2="200.5" stroke="#5ab1ef" stroke-width="0.8"/><circle cx="384.9" cy="200.5" r="2.3" fill="#fff" stroke="#5ab1ef" stroke-width="0.8"/><text x="392.0" y="202.2" fill="#555"><tspan class="c">二甲二硫</tspan></text><line x1="416.0" y1="200.5" x2="425.7" y2="200.5" stroke="#ffb980" stroke-width="0.8"/><circle cx="420.9" cy="200.5" r="2.3" fill="#fff" stroke="#ffb980" stroke-width="0.8"/><text x="428.0" y="202.2" fill="#555"><tspan class="c">三甲胺</tspan></text><line x1="448.7" y1="200.5" x2="458.4" y2="200.5" stroke="#d87a80" stroke-width="0.8"/><circle cx="453.6" cy="200.5" r="2.3" fill="#fff" stroke="#d87a80" stroke-width="0.8"/><text x="458.0" y="202.2" fill="#555"><tspan class="c">二硫化碳</tspan></text><line x1="482.6" y1="200.5" x2="492.3" y2="200.5" stroke="#8d98b3" stroke-width="0.8"/><circle cx="487.5" cy="200.5" r="2.3" fill="#fff" stroke="#8d98b3" stroke-width="0.8"/><text x="493.7" y="202.2" fill="#555"><tspan class="c">恶臭</tspan></text><line x1="508.0" y1="200.5" x2="517.7" y2="200.5" stroke="#e5cf0d" stroke-width="0.8"/><circle cx="512.9" cy="200.5" r="2.3" fill="#fff" stroke="#e5cf0d" stroke-width="0.8"/><text x="520.5" y="202.2" fill="#555">TVOC</text><line x1="537.0" y1="200.5" x2="546.7" y2="200.5" stroke="#97b552" stroke-width="0.8"/><circle cx="541.9" cy="200.5" r="2.3" fill="#fff" stroke="#97b552" stroke-width="0.8"/><text x="549.6" y="202.2" fill="#555"><tspan class="c">甲硫醇</tspan></text></g>
<!-- datazoom -->
<rect x="121.7" y="423.3" width="655" height="11.6" fill="none" stroke="#e6e9ef" stroke-width="0.6"/>
<polygon points="122,434.6 122.00,432.36 125.29,432.22 128.58,431.09 131.87,431.75 135.16,432.36 138.44,432.12 141.73,432.11 145.02,432.45 148.31,431.71 151.60,431.84 154.89,432.53 158.18,432.00 161.47,432.57 164.76,432.12 168.05,431.70 171.33,431.66 174.62,431.78 177.91,431.65 181.20,432.50 184.49,432.38 187.78,432.16 191.07,432.29 194.36,432.21 197.65,432.00 200.93,431.68 204.22,431.65 207.51,431.59 210.80,432.43 214.09,431.62 217.38,432.02 220.67,432.38 223.96,426.65 227.25,432.54 230.54,429.38 233.82,432.18 237.11,432.30 240.40,429.82 243.69,432.55 246.98,432.26 250.27,431.60 253.56,431.58 256.85,432.52 260.14,432.57 263.42,432.18 266.71,430.12 270.00,432.28 273.29,431.69 276.58,432.13 279.87,431.94 283.16,432.03 286.45,431.64 289.74,432.16 293.03,432.36 296.31,431.60 299.60,430.48 302.89,430.11 306.18,430.04 309.47,432.12 312.76,432.24 316.05,430.89 319.34,431.91 322.63,432.34 325.91,432.00 329.20,432.23 332.49,432.22 335.78,432.29 339.07,429.99 342.36,431.85 345.65,432.37 348.94,432.36 352.23,432.16 355.52,432.50 358.80,432.26 362.09,432.15 365.38,432.43 368.67,431.94 371.96,432.14 375.25,432.48 378.54,432.41 381.83,431.74 385.12,432.32 388.40,431.95 391.69,432.25 394.98,432.30 398.27,432.32 401.56,432.17 404.85,432.18 408.14,429.99 411.43,431.70 414.72,432.16 418.01,431.65 421.29,431.84 424.58,431.92 427.87,432.31 431.16,430.52 434.45,432.31 437.74,432.55 441.03,431.89 444.32,431.69 447.61,429.89 450.89,432.42 454.18,431.92 457.47,432.18 460.76,431.98 464.05,432.34 467.34,432.11 470.63,432.24 473.92,432.05 477.21,432.43 480.49,431.66 483.78,429.84 487.07,430.41 490.36,432.33 493.65,432.17 496.94,430.86 500.23,432.47 503.52,432.53 506.81,430.02 510.10,432.28 513.38,432.24 516.67,432.00 519.96,432.41 523.25,432.47 526.54,431.87 529.83,432.52 533.12,432.22 536.41,431.80 539.70,431.78 542.98,432.16 546.27,432.09 549.56,432.17 552.85,432.13 556.14,432.05 559.43,432.53 562.72,432.17 566.01,431.64 569.30,431.68 572.59,432.33 575.87,432.47 579.16,431.92 582.45,431.79 585.74,431.85 589.03,432.49 592.32,432.60 595.61,430.80 598.90,432.50 602.19,430.14 605.47,432.48 608.76,431.91 612.05,431.63 615.34,429.63 618.63,432.08 621.92,432.49 625.21,430.25 628.50,432.02 631.79,432.35 635.08,432.35 638.36,431.83 641.65,432.23 644.94,432.24 648.23,432.52 651.52,431.61 654.81,431.84 658.10,431.90 661.39,431.91 664.68,432.11 667.96,431.68 671.25,432.50 674.54,431.67 677.83,432.15 681.12,432.41 684.41,432.40 687.70,432.28 690.99,431.90 694.28,432.30 697.57,432.18 700.85,432.00 704.14,430.71 707.43,432.21 710.72,432.23 714.01,431.81 717.30,431.59 720.59,431.99 723.88,431.75 727.17,432.03 730.45,431.86 733.74,432.19 737.03,431.62 740.32,432.37 743.61,431.87 746.90,431.62 750.19,432.35 753.48,432.34 756.77,431.88 760.06,431.68 763.34,431.72 766.63,432.17 769.92,430.24 773.21,432.30 776.50,432.01 776.5,434.6" fill="#eceef3"/>
<polyline points="122.00,432.36 125.29,432.22 128.58,431.09 131.87,431.75 135.16,432.36 138.44,432.12 141.73,432.11 145.02,432.45 148.31,431.71 151.60,431.84 154.89,432.53 158.18,432.00 161.47,432.57 164.76,432.12 168.05,431.70 171.33,431.66 174.62,431.78 177.91,431.65 181.20,432.50 184.49,432.38 187.78,432.16 191.07,432.29 194.36,432.21 197.65,432.00 200.93,431.68 204.22,431.65 207.51,431.59 210.80,432.43 214.09,431.62 217.38,432.02 220.67,432.38 223.96,426.65 227.25,432.54 230.54,429.38 233.82,432.18 237.11,432.30 240.40,429.82 243.69,432.55 246.98,432.26 250.27,431.60 253.56,431.58 256.85,432.52 260.14,432.57 263.42,432.18 266.71,430.12 270.00,432.28 273.29,431.69 276.58,432.13 279.87,431.94 283.16,432.03 286.45,431.64 289.74,432.16 293.03,432.36 296.31,431.60 299.60,430.48 302.89,430.11 306.18,430.04 309.47,432.12 312.76,432.24 316.05,430.89 319.34,431.91 322.63,432.34 325.91,432.00 329.20,432.23 332.49,432.22 335.78,432.29 339.07,429.99 342.36,431.85 345.65,432.37 348.94,432.36 352.23,432.16 355.52,432.50 358.80,432.26 362.09,432.15 365.38,432.43 368.67,431.94 371.96,432.14 375.25,432.48 378.54,432.41 381.83,431.74 385.12,432.32 388.40,431.95 391.69,432.25 394.98,432.30 398.27,432.32 401.56,432.17 404.85,432.18 408.14,429.99 411.43,431.70 414.72,432.16 418.01,431.65 421.29,431.84 424.58,431.92 427.87,432.31 431.16,430.52 434.45,432.31 437.74,432.55 441.03,431.89 444.32,431.69 447.61,429.89 450.89,432.42 454.18,431.92 457.47,432.18 460.76,431.98 464.05,432.34 467.34,432.11 470.63,432.24 473.92,432.05 477.21,432.43 480.49,431.66 483.78,429.84 487.07,430.41 490.36,432.33 493.65,432.17 496.94,430.86 500.23,432.47 503.52,432.53 506.81,430.02 510.10,432.28 513.38,432.24 516.67,432.00 519.96,432.41 523.25,432.47 526.54,431.87 529.83,432.52 533.12,432.22 536.41,431.80 539.70,431.78 542.98,432.16 546.27,432.09 549.56,432.17 552.85,432.13 556.14,432.05 559.43,432.53 562.72,432.17 566.01,431.64 569.30,431.68 572.59,432.33 575.87,432.47 579.16,431.92 582.45,431.79 585.74,431.85 589.03,432.49 592.32,432.60 595.61,430.80 598.90,432.50 602.19,430.14 605.47,432.48 608.76,431.91 612.05,431.63 615.34,429.63 618.63,432.08 621.92,432.49 625.21,430.25 628.50,432.02 631.79,432.35 635.08,432.35 638.36,431.83 641.65,432.23 644.94,432.24 648.23,432.52 651.52,431.61 654.81,431.84 658.10,431.90 661.39,431.91 664.68,432.11 667.96,431.68 671.25,432.50 674.54,431.67 677.83,432.15 681.12,432.41 684.41,432.40 687.70,432.28 690.99,431.90 694.28,432.30 697.57,432.18 700.85,432.00 704.14,430.71 707.43,432.21 710.72,432.23 714.01,431.81 717.30,431.59 720.59,431.99 723.88,431.75 727.17,432.03 730.45,431.86 733.74,432.19 737.03,431.62 740.32,432.37 743.61,431.87 746.90,431.62 750.19,432.35 753.48,432.34 756.77,431.88 760.06,431.68 763.34,431.72 766.63,432.17 769.92,430.24 773.21,432.30 776.50,432.01" fill="none" stroke="#cdd2de" stroke-width="0.5"/>
<rect x="578.8" y="423.2" width="197" height="11.6" fill="#b3c0dc" fill-opacity="0.32"/>
<rect x="577.7" y="425.8" width="2.2" height="6" rx="0.7" fill="#c2cbdd" stroke="#9aa6c0" stroke-width="0.35"/>
<rect x="774.9" y="425.8" width="2.2" height="6" rx="0.7" fill="#c2cbdd" stroke="#9aa6c0" stroke-width="0.35"/>
</svg>
<div class="tt"><div class="tth">10-22 08:22:00</div><div class="ttr"><i style="background:#2ec7c9"></i><span class="c">硫化氢</span>: 0.008</div><div class="ttr"><i style="background:#b6a2de"></i><span class="c">氨气</span>: 0.185</div><div class="ttr"><i style="background:#5ab1ef"></i><span class="c">二甲二硫</span>: 0.023</div><div class="ttr"><i style="background:#ffb980"></i><span class="c">三甲胺</span>: 0.011</div><div class="ttr"><i style="background:#d87a80"></i><span class="c">二硫化碳</span>: 0.015</div><div class="ttr"><i style="background:#8d98b3"></i><span class="c">恶臭</span>: 1.9</div><div class="ttr"><i style="background:#e5cf0d"></i>TVOC: 0.011</div><div class="ttr"><i style="background:#97b552"></i><span class="c">甲硫醇</span>: 0.013</div></div>
</body></html>
